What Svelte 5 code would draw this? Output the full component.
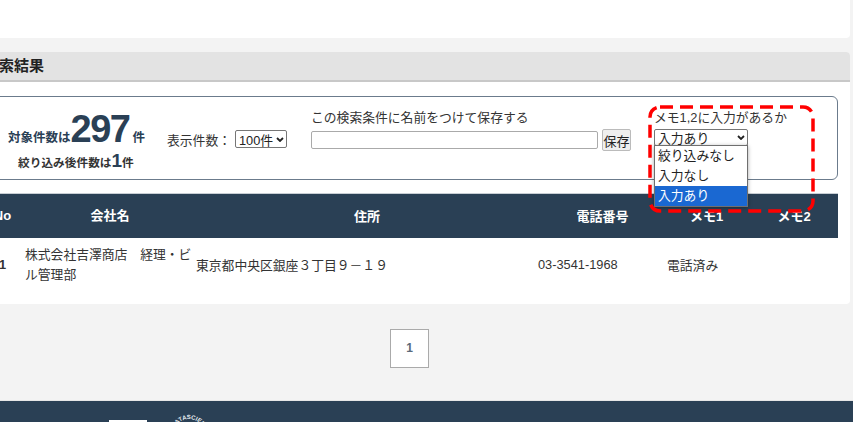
<script>
  const columns = [
    { key: 'no', label: 'No' },
    { key: 'company', label: '会社名' },
    { key: 'address', label: '住所' },
    { key: 'phone', label: '電話番号' },
    { key: 'memo1', label: 'メモ1' },
    { key: 'memo2', label: 'メモ2' }
  ];
  const memoOptions = ['絞り込みなし', '入力なし', '入力あり'];
  let memo = '入力あり';
</script>

{#snippet selectBox(value, cls)}
  <div class="select {cls}">
    <span>{value}</span>
    <svg width="8" height="5" viewBox="0 0 8 5"><path d="M1 1l3 3 3-3" fill="none" stroke="#222" stroke-width="1.8" /></svg>
  </div>
{/snippet}

<div class="page">
  <div class="top-card"></div>

  <section class="panel">
    <h2>検索結果</h2>
    <div class="panel-body">
      <div class="summary">
        <div class="counts">
          <p class="total">対象件数は<strong>297</strong><span>件</span></p>
          <p class="filtered">絞り込み後件数は<strong>1</strong>件</p>
        </div>
        <div class="per-page">
          表示件数：
          {@render selectBox('100件', 'small')}
        </div>
        <div class="save">
          <p>この検索条件に名前をつけて保存する</p>
          <div class="save-row">
            <input type="text" />
            <button>保存</button>
          </div>
        </div>
        <div class="memo">
          <p>メモ1,2に入力があるか</p>
          {@render selectBox(memo, 'wide')}
          <ul class="dropdown">
            {#each memoOptions as opt}
              <li class:selected={opt === memo}>{opt}</li>
            {/each}
          </ul>
        </div>
        <svg class="callout" width="167" height="108" viewBox="0 0 167 108">
          <rect x="2" y="2" width="163" height="104" rx="10" fill="none" stroke="#f00" stroke-width="3.5" stroke-dasharray="13 7" />
        </svg>
      </div>

      <div class="results">
        <div class="row head">
          {#each columns as col}
            <div class={col.key}>{col.label}</div>
          {/each}
        </div>
        <div class="row">
          <div class="no">1</div>
          <div class="company">株式会社吉澤商店　経理・ビル管理部</div>
          <div class="address">東京都中央区銀座３丁目９－１９</div>
          <div class="phone">03-3541-1968</div>
          <div class="memo1">電話済み</div>
          <div class="memo2"></div>
        </div>
      </div>
    </div>
  </section>

  <nav class="pager"><a href="#top">1</a></nav>

  <footer>
    <div class="logo-box"></div>
    <svg class="emblem" width="38" height="38" viewBox="0 0 38 38">
      <defs>
        <path id="arc" d="M3 21a16 16 0 0 1 32 0" />
      </defs>
      <text font-size="6" font-weight="700" fill="#e8edf1"><textPath href="#arc" startOffset="7">DATASCIENCE</textPath></text>
    </svg>
  </footer>
</div>

<style>
  :global(body) {
    margin: 0;
    background: #f3f3f3;
    overflow: hidden;
  }
  .page {
    width: 853px;
    height: 422px;
    overflow: hidden;
    display: flex;
    flex-direction: column;
    font-family: "Liberation Sans", "Noto Sans CJK JP", sans-serif;
    color: #333;
    font-size: 12.8px;
  }
  p {
    margin: 0;
  }
  .top-card {
    height: 38px;
    width: 850px;
    flex: none;
    background: #fff;
    border-radius: 0 0 4px 0;
  }
  .panel {
    flex: none;
    width: 880px;
    margin: 14px 0 0 -30px;
    background: #fff;
    border-radius: 4px;
  }
  h2 {
    margin: 0;
    height: 28px;
    padding-left: 14px;
    font-size: 15px;
    line-height: 28px;
    color: #222;
    background: #e3e3e3;
    border-bottom: 2px solid #c8c8c8;
    border-radius: 4px 4px 0 0;
  }
  .panel-body {
    padding: 14px 12px 12px 10px;
  }
  .summary {
    position: relative;
    height: 82px;
    border: 1px solid #6b7b8c;
    border-radius: 6px;
    display: flex;
  }
  .counts {
    width: 166px;
    flex: none;
    padding-left: 27px;
    box-sizing: border-box;
    color: #2a4055;
    font-weight: 700;
    font-size: 12.5px;
    text-align: left;
  }
  .total {
    height: 39px;
    margin-top: 14px;
    white-space: nowrap;
    line-height: 50px;
  }
  .total strong {
    font-size: 38px;
    line-height: 37px;
    letter-spacing: -1.5px;
  }
  .total span {
    margin-left: 3px;
  }
  .filtered {
    font-size: 11.7px;
    line-height: 22px;
    color: #333;
    padding-left: 10px;
  }
  .filtered strong {
    font-size: 19px;
    color: #2a4055;
  }
  .per-page {
    width: 144px;
    margin-left: 20px;
    flex: none;
    height: 18px;
    margin-top: 33px;
    display: flex;
    align-items: center;
    gap: 4px;
    white-space: nowrap;
  }
  .select {
    height: 17px;
    box-sizing: border-box;
    display: flex;
    align-items: center;
    justify-content: space-between;
    padding: 0 2px 0 3px;
    color: #222;
    background: #fff;
    border: 1px solid #767676;
    border-radius: 2px;
    overflow: hidden;
  }
  .select.small {
    width: 52px;
    height: 18px;
  }
  .select.wide {
    width: 94px;
  }
  .save {
    width: 343px;
    flex: none;
    padding-top: 10px;
  }
  .save-row {
    display: flex;
    align-items: center;
    gap: 4px;
    margin-top: 3px;
  }
  input {
    width: 287px;
    height: 18px;
    box-sizing: border-box;
    border: 1px solid #aaa;
    border-radius: 2px;
    padding: 0;
  }
  button {
    width: 29px;
    height: 22px;
    padding: 0;
    font-family: inherit;
    font-size: 13px;
    white-space: nowrap;
    color: #222;
    background: #efefef;
    border: 1px solid #bbb;
    border-radius: 2px;
    box-sizing: border-box;
  }
  .memo {
    position: relative;
    padding-top: 10px;
  }
  .memo p {
    margin-bottom: 3px;
  }
  .dropdown {
    position: absolute;
    z-index: 2;
    top: 48px;
    left: 0;
    width: 94px;
    box-sizing: border-box;
    margin: 0;
    padding: 0;
    list-style: none;
    background: #fff;
    border: 1px solid #6f6f6f;
    box-shadow: 0 1px 4px rgba(0, 0, 0, 0.35);
    color: #222;
  }
  .dropdown li {
    height: 20px;
    line-height: 20px;
    padding-left: 3px;
    white-space: nowrap;
  }
  .dropdown li.selected {
    background: #1a68d2;
    color: #fff;
  }
  .callout {
    position: absolute;
    z-index: 3;
    left: 667px;
    top: 8px;
    pointer-events: none;
  }
  .results {
    margin-top: 13px;
  }
  .row {
    display: grid;
    grid-template-columns: 45px 170px 344px 127px 81px 94px;
    align-items: center;
    height: 53px;
    padding-bottom: 1px;
    color: #333;
  }
  .row > div {
    padding: 0 1px;
    box-sizing: border-box;
  }
  .row.head {
    height: 43px;
    background: #2a4055;
    color: #fff;
    font-size: 13px;
    font-weight: 700;
    text-align: center;
    border-top: 1px solid #c8ced4;
  }
  .no {
    text-align: center;
    font-weight: 700;
  }
  .row > .company {
    line-height: 20px;
    padding: 0;
  }
  .row:not(.head) > .phone {
    text-indent: -2px;
  }
  .address {
    white-space: nowrap;
  }
  .pager {
    flex: none;
    display: flex;
    justify-content: center;
    margin-top: 25px;
    height: 71px;
    padding-right: 34px;
  }
  .pager a {
    width: 37px;
    height: 37px;
    line-height: 37px;
    text-align: center;
    background: #fff;
    border: 1px solid #aaa;
    font-size: 12px;
    font-weight: 700;
    color: #5a6a7a;
    text-decoration: none;
  }
  footer {
    flex: 1;
    display: flex;
    align-items: flex-start;
    background: #2a4055;
    border-top: 1px solid #e6e6e6;
    padding: 13px 0 0 109px;
    overflow: hidden;
  }
  .logo-box {
    width: 38px;
    height: 30px;
    margin-top: 6px;
    background: #fff;
    flex: none;
  }
  .emblem {
    flex: none;
    margin-left: 23px;
  }
</style>
